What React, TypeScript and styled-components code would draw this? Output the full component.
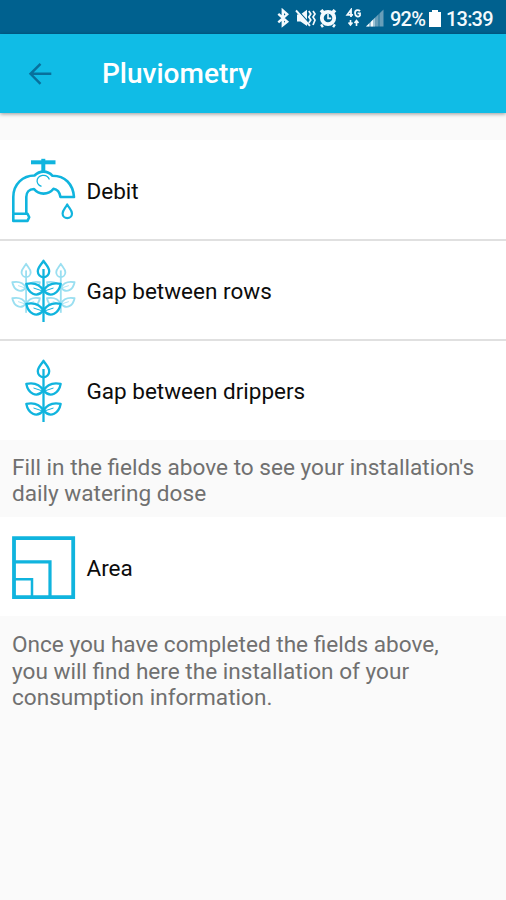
import React from 'react';
import styled, { createGlobalStyle } from 'styled-components';

const GlobalStyle = createGlobalStyle`
  * { box-sizing: border-box; }
  body { margin: 0; background: #fafafa; font-family: Roboto, sans-serif; }
`;

const Screen = styled.div`
  width: 100%;
  height: 900px;
  display: flex;
  flex-direction: column;
  overflow: hidden;
  background: #fafafa;
`;

const StatusBar = styled.div`
  height: 34px;
  flex: none;
  display: flex;
  justify-content: flex-end;
  align-items: center;
  padding: 3px 12px 0 0;
  background: #00618f;
  color: #f4fafd;
`;

const StatusIcons = styled.svg`
  display: block;
  width: 110px;
  height: 20px;
  margin: 0 5px 2px 0;
`;

const StatusText = styled.span<{ $width: number }>`
  width: ${({ $width }) => $width}px;
  font-size: 20px;
  line-height: 24px;
  font-weight: 500;
  letter-spacing: -0.8px;
  white-space: nowrap;
`;

const Battery = styled.svg`
  display: block;
  width: 12px;
  height: 18px;
  margin: 0 5px 2px 3px;
`;

const AppBar = styled.header`
  height: 79px;
  flex: none;
  display: flex;
  align-items: center;
  padding-left: 28px;
  background: #10bce6;
  box-shadow: 0 1px 4px rgba(0, 0, 0, 0.4);
  z-index: 1;
`;

const BackArrow = styled.svg`
  width: 24px;
  height: 24px;
  margin-right: 50px;
`;

const Title = styled.h1`
  margin: 0;
  color: #fff;
  font-size: 28px;
  line-height: 32px;
  font-weight: 500;
`;

const Content = styled.main`
  padding-top: 27px;
`;

const Row = styled.div<{ $divided?: boolean; $height: number }>`
  height: ${({ $height }) => $height}px;
  display: flex;
  align-items: center;
  padding: 2px 0 0 11px;
  background: #fff;
  border-bottom: ${({ $divided }) => ($divided ? '2px solid #e0e0e0' : '0')};
`;

const RowIcon = styled.svg`
  width: 65px;
  height: 65px;
  flex: none;
  margin-right: 10.5px;
`;

const Label = styled.span<{ $drop?: number }>`
  padding-top: ${({ $drop = 0 }) => $drop}px;
  color: #0c0c0c;
  font-size: 22.5px;
  line-height: 27px;
`;

const Note = styled.p<{ $height: number; $top: number; $leading: number }>`
  margin: 0;
  height: ${({ $height }) => $height}px;
  padding: ${({ $top }) => $top}px 0 0 12px;
  color: #707070;
  font-size: 22.6px;
  line-height: ${({ $leading }) => $leading}px;
  white-space: pre;
`;

const BLUE = '#10b4de';

function TapIcon() {
  return (
    <RowIcon viewBox="11 158 65 65" fill="none" stroke={BLUE} strokeWidth="2.6" strokeLinejoin="round">
      <path d="M31 162.3H55.5" strokeWidth="4" />
      <path d="M43.3 158.8V172" strokeWidth="4" />
      <path d="M13.3 213.5V197C13.3 184 23 175.5 34.5 175.5C37 173 40 171.6 43.5 171.6C47 171.6 50 173 52.5 175.8C65 175.8 73 184 74 197H60.5C59.5 191.5 57.5 189.3 53.5 188.8C51 192 47.5 193.6 43.5 193.6C39.5 193.6 36.5 192.2 34 189C29 189 26.3 192.5 26.3 197V213.5" />
      <path d="M13.3 213.7H27.5L29.2 217.3L27.5 220.9H13.3Z" />
      <path d="M37 181.5A6.4 6.4 0 0 1 49.4 179.5M37.2 179.5A6.4 6.4 0 0 0 41.5 186.4" strokeWidth="1.2" />
      <path d="M67.2 204.5C65.5 208 62.6 210.4 62.6 213.5A4.7 4.7 0 0 0 72 213.5C72 210.4 69 208 67.2 204.5Z" strokeWidth="2.2" />
    </RowIcon>
  );
}

/* One stem with a bud and two pairs of leaves, centred on x = 43.5. */
function Plant({ fill = 'none' }: { fill?: string }) {
  return (
    <>
      <path d="M43.5 359.8C41.4 363.4 37.8 366.4 37.8 370.3A5.7 6 0 0 0 49.2 370.3C49.2 366.4 45.6 363.4 43.5 359.8Z" fill={fill} />
      {[0, 20].map((y) => (
        <g key={y} transform={`translate(0 ${y})`}>
          <path d="M43.3 389.5C39.5 382.4 33.5 381.4 26.3 382.8C28 392 36.5 397.8 43.3 389.5Z" fill={fill} />
          <path d="M43.7 389.5C47.5 382.4 53.5 381.4 60.7 382.8C59 392 50.5 397.8 43.7 389.5Z" fill={fill} />
          <path d="M33.5 387L43.5 390.3L53.5 387" strokeWidth="1" />
        </g>
      ))}
      <path d="M43.5 368V421" />
    </>
  );
}

function PlantIcon() {
  return (
    <RowIcon viewBox="11 358 65 65" fill="none" stroke={BLUE} strokeWidth="2.3" strokeLinejoin="round">
      <Plant />
    </RowIcon>
  );
}

function PlantsIcon() {
  return (
    <RowIcon viewBox="11 358 65 65" fill="none" stroke={BLUE} strokeWidth="2.3" strokeLinejoin="round">
      <g opacity="0.42">
        <g transform="translate(-8.7 75) scale(.8)"><Plant /></g>
        <g transform="translate(26 75) scale(.8)"><Plant /></g>
      </g>
      <Plant fill="#fff" />
    </RowIcon>
  );
}

function AreaIcon() {
  return (
    <RowIcon viewBox="11 535 65 65" fill="none" stroke={BLUE}>
      <path d="M14 538.2H73.2V597.2H14Z" strokeWidth="3.8" />
      <path d="M15 561.8H50V596" strokeWidth="3.2" />
      <path d="M15 579.3H32V596" strokeWidth="2.5" />
    </RowIcon>
  );
}

function StatusBarIcons() {
  return (
    <StatusIcons viewBox="275 8 110 20" fill="none" stroke="#f4fafd">
      <path d="M278.3 13.8L287.2 21.8L282.8 25.2V10.4L287.2 14.3L278.3 22.3" strokeWidth="2.4" />
      <path d="M297 14.5H300.5L307 9.7V26L300.5 21.5H297Z" fill="#f4fafd" stroke="none" />
      <path d="M297 9.5L311 25" stroke="#00618f" strokeWidth="1.2" />
      <path d="M296 10.5L310 25.8" strokeWidth="1.9" />
      <path d="M308.8 11L310.8 14L308.8 17L310.8 20L308.8 23M313 11L315 14L313 17L315 20L313 25" strokeWidth="1.7" />
      <path d="M323.5 10.2L320.8 12.5M332.5 10.2L335.2 12.5M323 25.2L321 26.4M333 25.2L335 26.4" strokeWidth="3.4" />
      <circle cx="328" cy="18" r="6.2" strokeWidth="3.8" />
      <path d="M328 14V18.4H331.2" strokeWidth="1.6" />
      <path d="M351 17V9.8L347.3 14.8H353M360 11.2C358.5 9.4 355 9.6 355 13.1S358.8 17.4 360 15.6V13.4H357.6" strokeWidth="1.8" />
      <path d="M350.5 20V24.5M348.5 22.6L350.5 25L352.5 22.6M356.5 26V21M354.5 23L356.5 20.6L358.5 23" strokeWidth="1.6" />
      <path d="M366 26.5L383.5 9.5V26.5Z" fill="#689eb9" stroke="none" />
      <path d="M366 26.5L375 17.8V26.5Z" fill="#f4fafd" stroke="none" />
      <path d="M370 20V27M374 16V27M379 12V27" stroke="#00618f" strokeWidth=".7" />
    </StatusIcons>
  );
}

export default function App() {
  return (
    <>
      <GlobalStyle />
      <Screen>
        <StatusBar>
          <StatusBarIcons />
          <StatusText $width={36}>92%</StatusText>
          <Battery viewBox="0 0 12 18">
            <path d="M3 1H9V3H12V18H0V3H3Z" fill="#fff" />
          </Battery>
          <StatusText $width={48}>13:39</StatusText>
        </StatusBar>
        <AppBar>
          <BackArrow viewBox="0 0 24 24" fill="none" stroke="#08709c" strokeWidth="2.4">
            <path d="M23.3 11.8H3M12.5 1.8L2.5 11.8L12.5 21.8" />
          </BackArrow>
          <Title>Pluviometry</Title>
        </AppBar>
        <Content>
          <Row $height={101} $divided>
            <TapIcon />
            <Label $drop={2}>Debit</Label>
          </Row>
          <Row $height={100} $divided>
            <PlantsIcon />
            <Label>Gap between rows</Label>
          </Row>
          <Row $height={99}>
            <PlantIcon />
            <Label>Gap between drippers</Label>
          </Row>
          <Note $height={77} $top={15} $leading={26}>{"Fill in the fields above to see your installation's\ndaily watering dose"}</Note>
          <Row $height={99}>
            <AreaIcon />
            <Label $drop={2}>Area</Label>
          </Row>
          <Note $height={110} $top={16} $leading={26.6}>{'Once you have completed the fields above,\nyou will find here the installation of your\nconsumption information.'}</Note>
        </Content>
      </Screen>
    </>
  );
}
